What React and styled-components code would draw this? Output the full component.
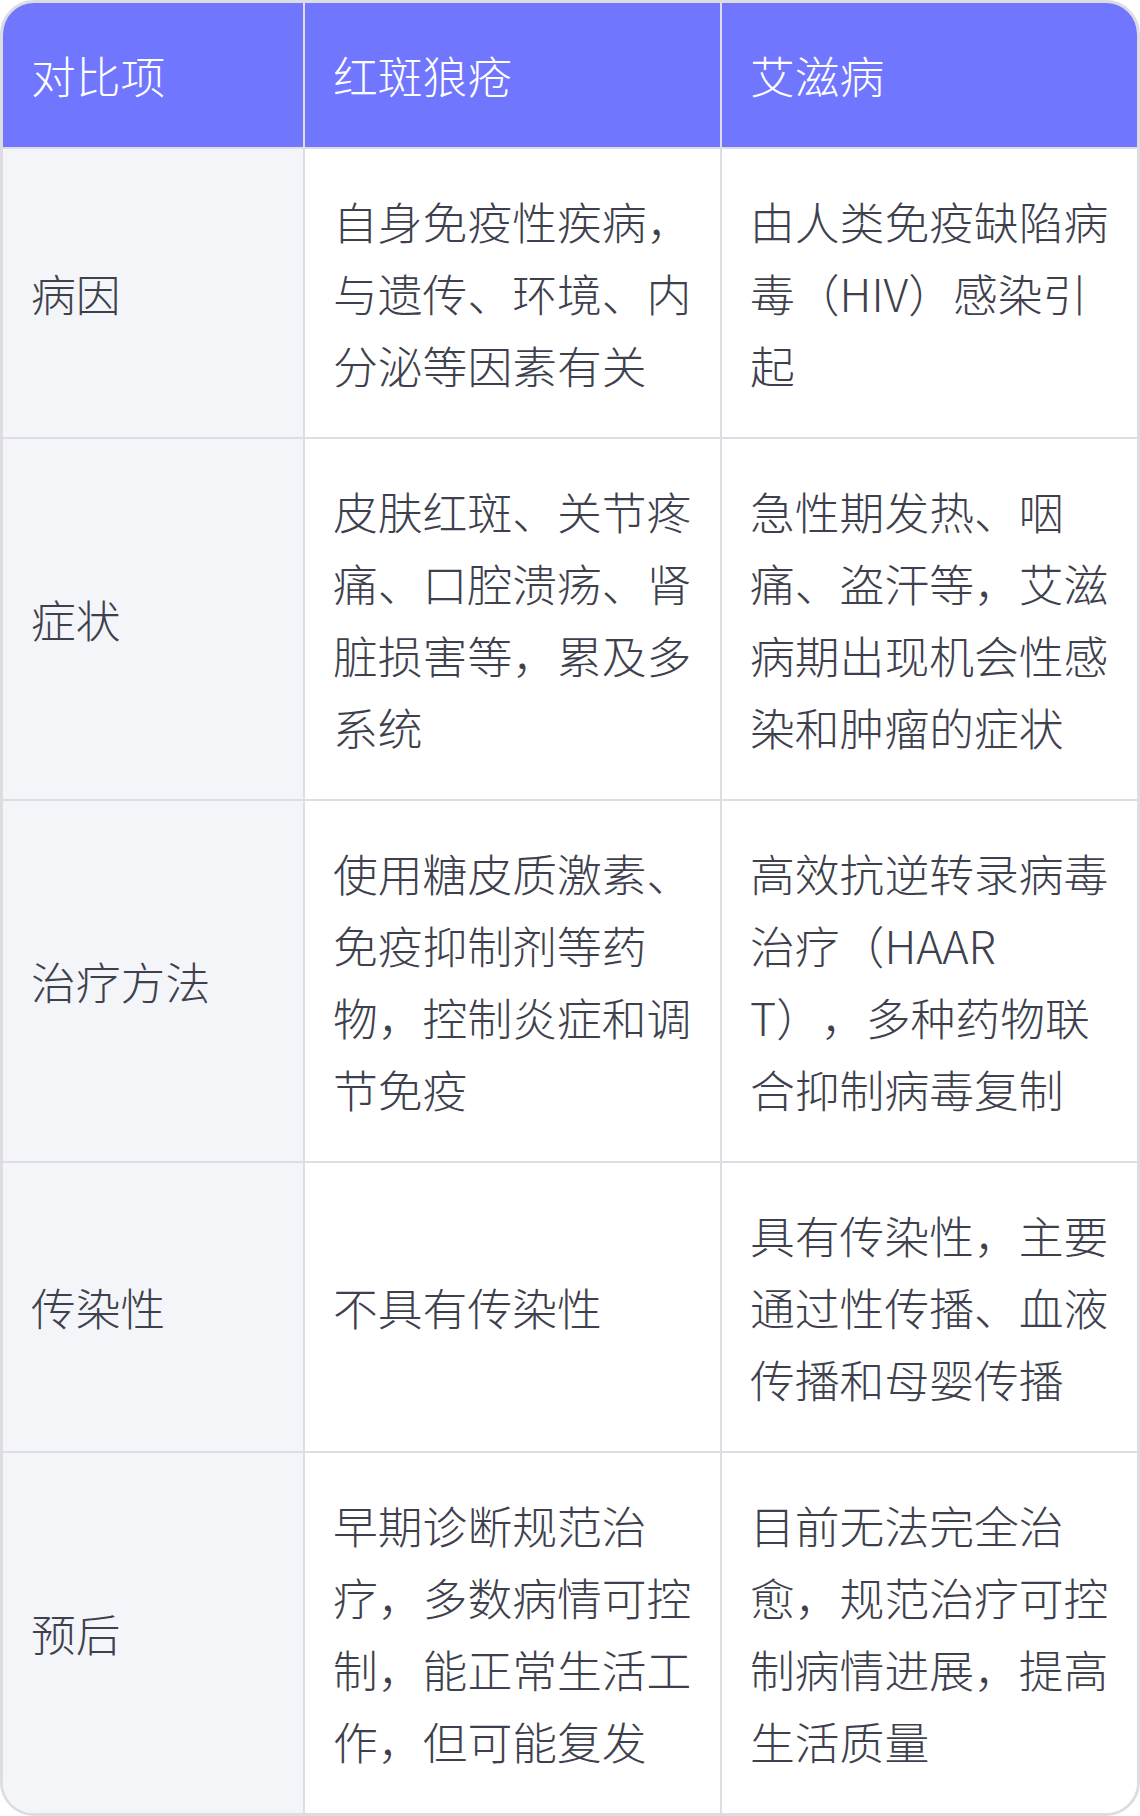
import styled, { createGlobalStyle } from "styled-components";

const GlobalStyle = createGlobalStyle`
    html, body {
        margin: 0;
        padding: 0;
        background: #ffffff;
    }
    * {
        box-sizing: border-box;
    }
`;

const Table = styled.div`
    width: 1140px;
    border: 3px solid #dcdce1;
    border-radius: 34px;
    overflow: hidden;
    background: #ffffff;
    font-family: "Noto Sans CJK SC", "Noto Sans", sans-serif;
    font-weight: 300;
    font-size: 44.8px;
    line-height: 72px;
    text-spacing-trim: space-all;
`;

const Row = styled.div`
    display: grid;
    grid-template-columns: 300px 1fr 1fr;
    background: ${(p) => (p.$head ? "#7176ff" : "#ffffff")};
    border-bottom: 2px solid #dddde3;
    &:last-child {
        border-bottom: none;
    }
`;

const Cell = styled.div`
    display: flex;
    align-items: center;
    padding: 36px 28px;
    word-break: break-all;
    color: ${(p) => (p.$head ? "#ffffff" : "#3e414d")};
    background: ${(p) => (p.$label && !p.$head ? "#f4f5f9" : "transparent")};
    & + & {
        border-left: 2px solid ${(p) => (p.$head ? "#d8d9f0" : "#dddde3")};
    }
`;

const rows = [
    ["病因", "自身免疫性疾病，与遗传、环境、内分泌等因素有关", "由人类免疫缺陷病毒（HIV）感染引起"],
    ["症状", "皮肤红斑、关节疼痛、口腔溃疡、肾脏损害等，累及多系统", "急性期发热、咽痛、盗汗等，艾滋病期出现机会性感染和肿瘤的症状"],
    ["治疗方法", "使用糖皮质激素、免疫抑制剂等药物，控制炎症和调节免疫", "高效抗逆转录病毒治疗（HAART），多种药物联合抑制病毒复制"],
    ["传染性", "不具有传染性", "具有传染性，主要通过性传播、血液传播和母婴传播"],
    ["预后", "早期诊断规范治疗，多数病情可控制，能正常生活工作，但可能复发", "目前无法完全治愈，规范治疗可控制病情进展，提高生活质量"],
];

const App = () => {
  return (
    <>
      <GlobalStyle />
      <Table>
        <Row $head>
          <Cell $head $label>对比项</Cell>
          <Cell $head>红斑狼疮</Cell>
          <Cell $head>艾滋病</Cell>
        </Row>
        {rows.map((r) => (
          <Row key={r[0]}>
            <Cell $label>{r[0]}</Cell>
            <Cell>{r[1]}</Cell>
            <Cell>{r[2]}</Cell>
          </Row>
        ))}
      </Table>
    </>
  )
}

export default App;
